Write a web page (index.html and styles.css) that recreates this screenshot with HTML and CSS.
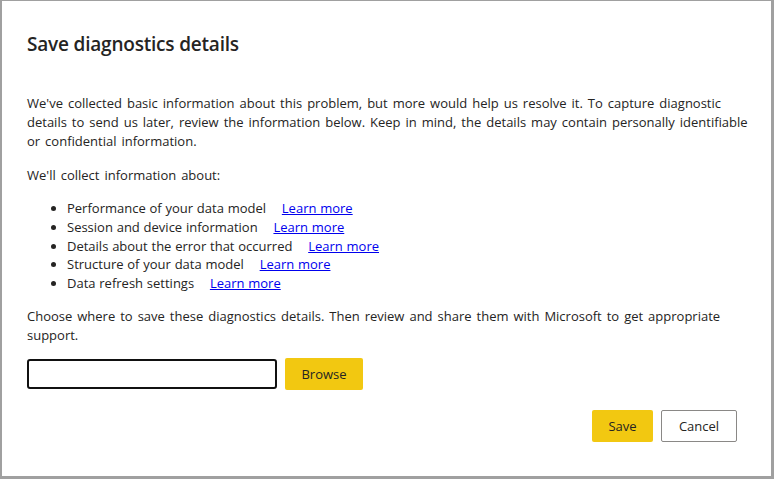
FILE: index.html
```html
<!DOCTYPE html>
<html>
<head>
<meta charset="utf-8">
<link rel="stylesheet" href="styles.css">
</head>
<body>
<div class="dialog">
  <h1 class="title">Save diagnostics details</h1>
  <p class="para intro">We've collected basic information about this problem, but more would help us resolve it. To capture diagnostic details to send us later, review the information below. Keep in mind, the details may contain personally identifiable or confidential information.</p>
  <p class="para">We'll collect information about:</p>
  <ul class="list">
    <li>Performance of your data model <a href="#">Learn more</a></li>
    <li>Session and device information <a href="#">Learn more</a></li>
    <li>Details about the error that occurred <a href="#">Learn more</a></li>
    <li>Structure of your data model <a href="#">Learn more</a></li>
    <li>Data refresh settings <a href="#">Learn more</a></li>
  </ul>
  <p class="para choose">Choose where to save these diagnostics details. Then review and share them with Microsoft to get appropriate support.</p>
  <div class="path-row">
    <input class="path" type="text">
    <button class="btn primary">Browse</button>
  </div>
  <div class="footer">
    <button class="btn primary save">Save</button>
    <button class="btn secondary">Cancel</button>
  </div>
</div>
</body>
</html>
```

FILE: styles.css
```css
html, body {
  margin: 0;
  padding: 0;
  background: #a0a0a0;
}
body {
  width: 774px;
  height: 479px;
  padding: 1px 3px 3px 2px;
  box-sizing: border-box;
  font-family: "Open Sans", "Noto Sans", sans-serif;
  color: #252423;
}
.dialog {
  background: #fff;
  height: 100%;
  box-sizing: border-box;
  padding: 30px 10px 0 25px;
}
.title {
  margin: 0 0 37px 0;
  font-size: 19px;
  font-weight: 600;
  line-height: 26px;
  letter-spacing: -0.2px;
}
.para {
  margin: 0 0 15px 0;
  font-size: 13px;
  line-height: 19px;
  word-spacing: 1.6px;
  max-width: 722px;
}
.choose {
  margin-bottom: 13px;
}
.list {
  margin: -1px 0 14px 0;
  padding: 0 0 0 40px;
  font-size: 13px;
  line-height: 18.8px;
  word-spacing: 0.4px;
}
.list a {
  color: #0000ee;
  margin-left: 12px;
}
.path-row {
  display: flex;
  gap: 8px;
  align-items: center;
}
.path {
  width: 250px;
  height: 30px;
  box-sizing: border-box;
  border: 2px solid #111;
  border-radius: 3px;
  margin: 0;
}
.btn {
  font-family: inherit;
  font-size: 13px;
  height: 32px;
  box-sizing: border-box;
  border-radius: 2px;
  color: #252423;
  padding: 0 16px;
  margin: 0;
}
.primary {
  background: #f2c811;
  border: none;
  width: 78px;
}
.secondary {
  background: #fff;
  border: 1px solid #8a8886;
  width: 76px;
}
.footer {
  display: flex;
  justify-content: flex-end;
  gap: 8px;
  margin-top: 20px;
  padding-right: 24px;
}
.save {
  width: 61px;
}
```
